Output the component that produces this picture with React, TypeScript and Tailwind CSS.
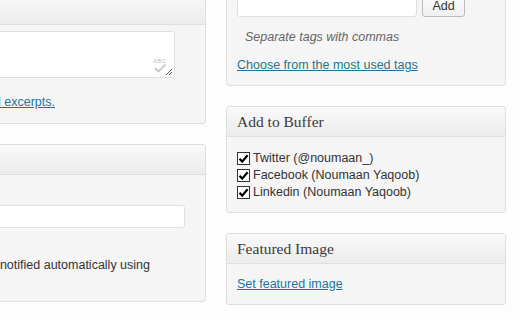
import React from "react";

const Check = () => (
  <span className="inline-flex items-center justify-center w-[13px] h-[13px] border border-[#333] bg-white mr-[3px] shrink-0">
    <svg width="11" height="11" viewBox="0 0 11 11">
      <path d="M1.5 5.8 L4.2 8.6 L9.6 2.2" stroke="#000" strokeWidth="2.2" fill="none" strokeLinejoin="miter" />
    </svg>
  </span>
);

const Header = ({ title }: { title?: string }) => (
  <div className="h-[30px] border-b border-[#dfdfdf] bg-gradient-to-b from-[#f9f9f9] to-[#ececec] rounded-t-[3px] flex items-center px-[10px] pt-[1px]">
    {title && (
      <span className="text-[15.5px] text-[#3a3a3a]" style={{ fontFamily: '"Liberation Serif", Georgia, serif' }}>
        {title}
      </span>
    )}
  </div>
);

export default function App() {
  return (
    <div
      className="w-[520px] h-[320px] overflow-hidden bg-[#fdfdfd] text-[12.5px] text-[#333]"
      style={{ fontFamily: '"Liberation Sans", Arial, sans-serif' }}
    >
      <div className="flex gap-[20px]">
        {/* Left column */}
        <div className="ml-[-300px] w-[506px] mt-[-6px] flex flex-col gap-[20px] shrink-0">
          <div className="border border-[#dfdfdf] rounded-[3px] bg-[#f5f5f5] h-[130px]">
            <Header />
            <div className="pt-[6px] pl-[10px] pr-[30px]">
              <div className="relative h-[47px] bg-white border border-[#dfdfdf] rounded-[3px]">
                <div className="absolute right-[7px] top-[26px] flex flex-col items-center">
                  <span className="text-[6px] leading-[6px] text-[#bbb] tracking-[0.5px]">ABC</span>
                  <svg width="14" height="9" viewBox="0 0 14 9">
                    <path d="M2 4 L5.5 7.5 L12.5 0.5" stroke="#c8c8c8" strokeWidth="1.8" fill="none" />
                  </svg>
                </div>
                <svg className="absolute right-[1px] bottom-[1px]" width="8" height="8" viewBox="0 0 8 8">
                  <path d="M1 7 L7 1 M4 7 L7 4" stroke="#555" strokeWidth="1" />
                </svg>
              </div>
            </div>
            <div className="mt-[16px] leading-[16px] whitespace-nowrap flex justify-end pr-[150px]">
              <span>
                Excerpts are optional hand-crafted summaries of your content that can be used in your theme.{" "}
                <span className="text-[#21759b] underline">Learn more about manual excerpts.</span>
              </span>
            </div>
          </div>
          <div className="border border-[#dfdfdf] rounded-[3px] bg-[#f5f5f5] h-[158px]">
            <Header />
            <div className="pl-[10px] pr-[20px]">
              <div className="mt-[30px] h-[23px] bg-white border border-[#dfdfdf] rounded-[3px]" />
            </div>
            <div className="mt-[29px] leading-[16px] whitespace-nowrap flex justify-end pr-[55px]">
              <span>Trackbacks are a way to notify legacy blog systems that you’ve linked to them. If you link other WordPress sites they’ll be notified automatically using</span>
            </div>
          </div>
        </div>

        {/* Right column */}
        <div className="w-[280px] mt-[-20px] flex flex-col gap-[20px] shrink-0">
          <div className="border border-[#dfdfdf] rounded-[3px] bg-[#f5f5f5] h-[106px]">
            <div className="pl-[10px] pt-[11px] flex gap-[5px]">
              <div className="w-[180px] h-[25px] bg-white border border-[#dfdfdf] rounded-[3px]" />
              <div className="w-[43px] h-[25px] bg-gradient-to-b from-[#fefefe] to-[#f0f0f0] border border-[#bbb] rounded-[3px] flex items-end justify-center pb-[3px] text-[#333] leading-[14px]">
                Add
              </div>
            </div>
            <div className="pl-[18px] mt-[12px] italic text-[#666] leading-[16px]">Separate tags with commas</div>
            <div className="pl-[10px] mt-[12px] leading-[16px]">
              <span className="text-[#21759b] underline">Choose from the most used tags</span>
            </div>
          </div>

          <div className="border border-[#dfdfdf] rounded-[3px] bg-[#f5f5f5] h-[107px]">
            <Header title="Add to Buffer" />
            <div className="pl-[10px] pt-[13px] flex flex-col">
              {["Twitter (@noumaan_)", "Facebook (Noumaan Yaqoob)", "Linkedin (Noumaan Yaqoob)"].map((t) => (
                <div key={t} className="flex items-center h-[17px] leading-[17px] whitespace-nowrap">
                  <Check />
                  <span>{t}</span>
                </div>
              ))}
            </div>
          </div>

          <div className="border border-[#dfdfdf] rounded-[3px] bg-[#f5f5f5] h-[72px]">
            <Header title="Featured Image" />
            <div className="pl-[10px] pt-[12px] leading-[16px]">
              <span className="text-[#21759b] underline">Set featured image</span>
            </div>
          </div>
        </div>
      </div>
    </div>
  );
}
